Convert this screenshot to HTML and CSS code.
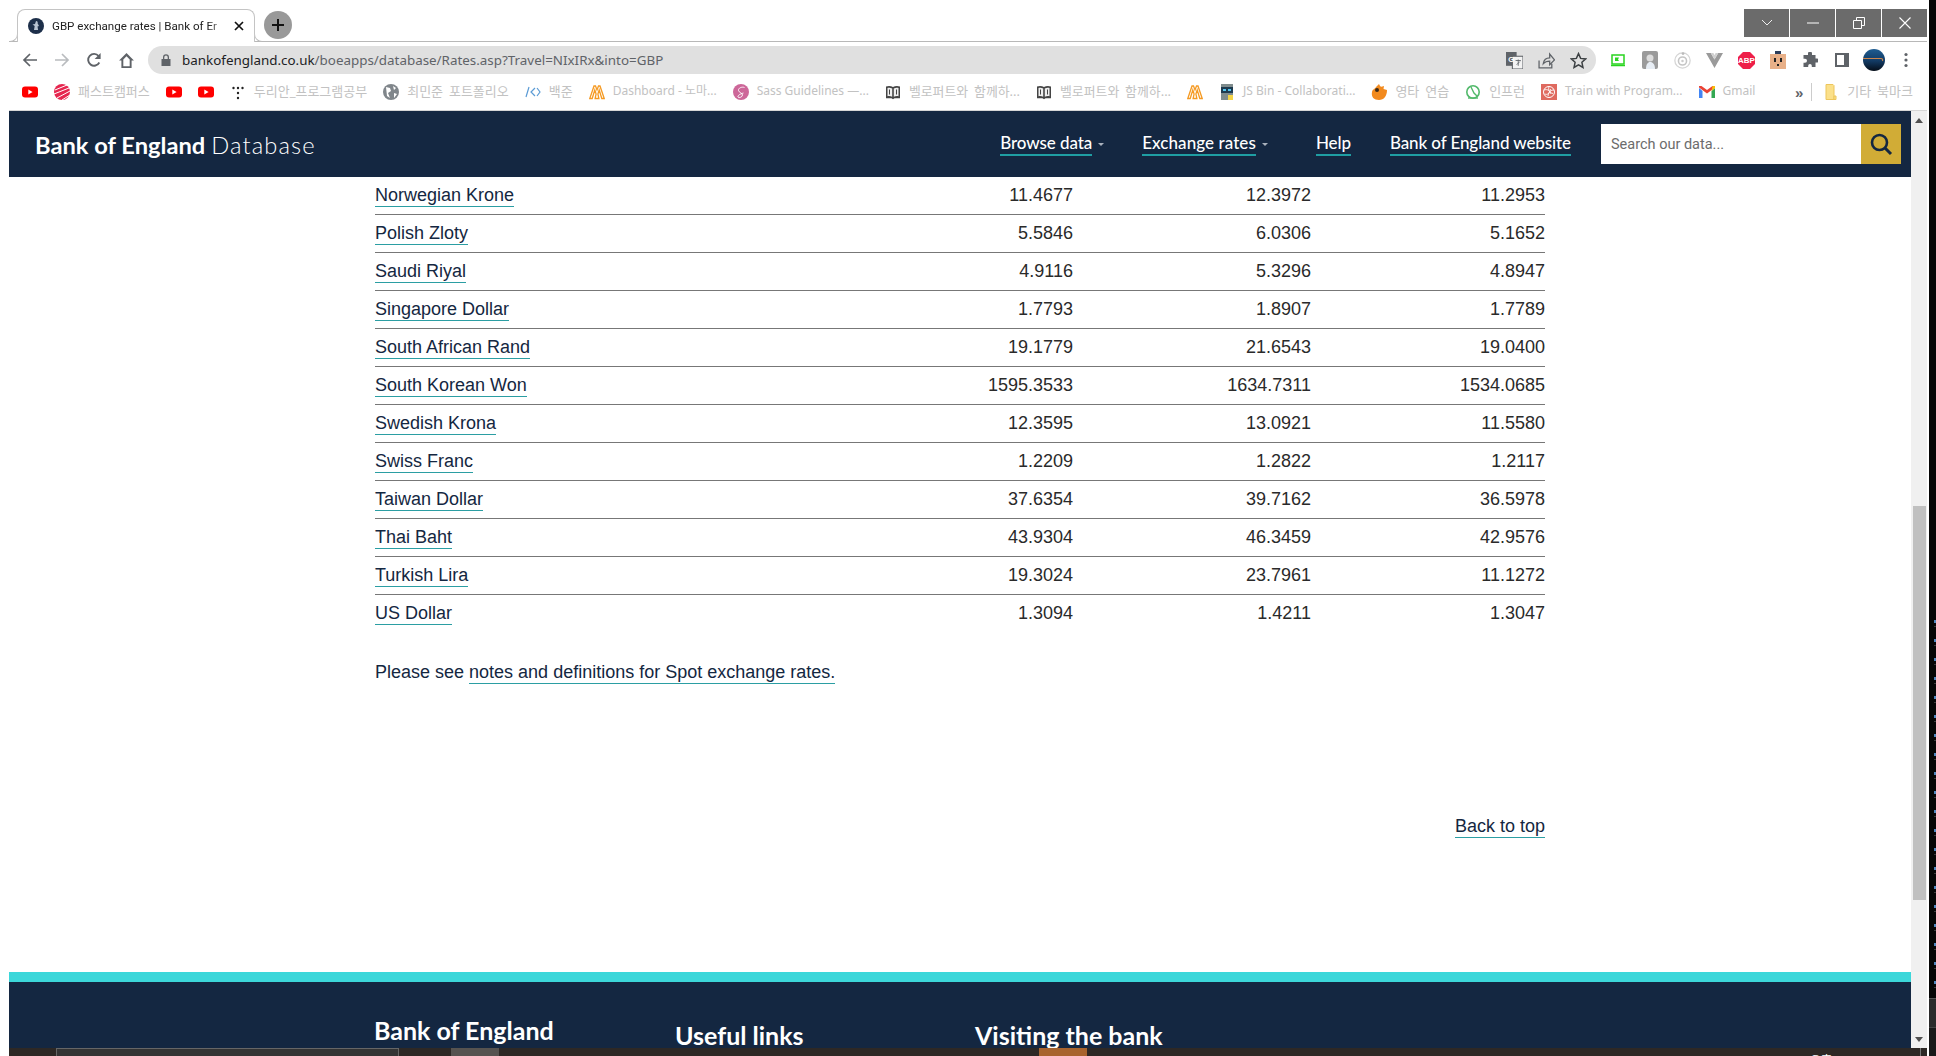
FILE: index.html
```html
<!DOCTYPE html>
<html lang="en">
<head>
<meta charset="utf-8">
<title>GBP exchange rates | Bank of England</title>
<link rel="stylesheet" href="styles.css">
</head>
<body>
<svg class="defs" width="0" height="0" aria-hidden="true">
  <symbol id="yt" viewBox="0 0 16 16"><rect x="0" y="2.5" width="16" height="11" rx="3" fill="#f00"/><path d="M6.3 5.6 10.6 8l-4.3 2.4z" fill="#fff"/></symbol>
  <symbol id="book" viewBox="0 0 16 16"><path d="M1 2.5c2.500-1 5-.8 7 .6 2-1.400 4.500-1.600 7-.6v11.800H9.500l-1.500 1-1.500-1H1z" fill="#444"/><path d="M2.500 4c1.700-.5 3.200-.3 4.700.6v8.200c-1.500-.8-3-1-4.700-.6zM13.500 4c-1.700-.5-3.200-.3-4.700.6v8.200c1.500-.8 3-1 4.700-.6z" fill="#eee"/><path d="M4.500 5.500v5M11.500 5.500v5" stroke="#444"/></symbol>
  <symbol id="mtn" viewBox="0 0 16 16"><path d="M.8 14.500 5 2h1.500L8 6l1.500-4H11l4.200 12.500h-2.400L10.200 6 8.900 10l1 4.500H6.100l1-4.500L5.800 6l-2.600 8.500z" fill="none" stroke="#f59a23" stroke-width="1.300"/></symbol>
</svg>

<div class="desktop">
  <div class="edge-left"></div>

  <div class="window">
    <header class="tabstrip">
      <div class="tab">
        <svg class="favicon" viewBox="0 0 16 16"><circle cx="8" cy="8" r="8" fill="#1d2f4a"/><path d="M8 3c1.500 0 2 1 1.600 2.200L11 8l-1.500.5.600 3.500H6l.7-4L4.500 6.500 7 6z" fill="#b9c4d2"/></svg>
        <span class="tab-title">GBP exchange rates | Bank of Er</span>
        <svg class="tab-close" viewBox="0 0 10 10"><path d="M1 1l8 8M9 1l-8 8" stroke="#111" stroke-width="1.700"/></svg>
      </div>
      <div class="newtab"><svg viewBox="0 0 14 14" width="14" height="14"><path d="M7 1v12M1 7h12" stroke="#111" stroke-width="2"/></svg></div>
      <div class="winbtns">
        <div class="winbtn"><svg viewBox="0 0 12 8" width="12" height="8"><path d="M1 1l5 5 5-5" fill="none" stroke="#eee"/></svg></div>
        <div class="winbtn"><svg viewBox="0 0 12 2" width="12" height="2"><path d="M0 1h12" stroke="#fff" stroke-width="1"/></svg></div>
        <div class="winbtn"><svg viewBox="0 0 12 12" width="12" height="12"><path d="M.5 3.500h8v8h-8zM3.500 3.500v-3h8v8h-3" fill="none" stroke="#fff"/></svg></div>
        <div class="winbtn"><svg viewBox="0 0 12 12" width="12" height="12"><path d="M.5.500l11 11M11.500.500l-11 11" stroke="#fff" stroke-width="1.100"/></svg></div>
      </div>
    </header>

    <div class="toolbar">
      <div class="tool"><svg viewBox="0 0 16 16" width="16" height="16"><path d="M15 8H2M8 2 2 8l6 6" fill="none" stroke="#5f6368" stroke-width="1.700"/></svg></div>
      <div class="tool"><svg viewBox="0 0 16 16" width="16" height="16"><path d="M1 8h13M8 2l6 6-6 6" fill="none" stroke="#b9bcbf" stroke-width="1.700"/></svg></div>
      <div class="tool"><svg viewBox="0 0 16 16" width="16" height="16"><path d="M13.300 10.500A5.900 5.900 0 1 1 12.600 4" fill="none" stroke="#5f6368" stroke-width="1.900"/><path d="M14.600 1v6h-6z" fill="#5f6368"/></svg></div>
      <div class="tool"><svg viewBox="0 0 16 16" width="17" height="17"><path d="M8 1 1 8h2.200v7h9.600V8H15zM5 13.300V7l3-3 3 3v6.300z" fill="#5f6368"/></svg></div>
      <div class="omnibox">
        <svg class="lock" viewBox="0 0 12 14" width="12" height="14"><path d="M3 6V4.200a3 3 0 0 1 6 0V6h1.500v7h-9V6zm1.300 0h3.400V4.200a1.700 1.700 0 0 0-3.400 0z" fill="#5f6368"/></svg>
        <span class="url"><span class="url-host">bankofengland.co.uk</span>/boeapps/database/Rates.asp?Travel=NIxIRx&amp;into=GBP</span>
        <div class="omni-actions">
          <div class="tool"><svg viewBox="0 0 16 16" width="17" height="17"><rect x="0" y="0" width="10" height="13" fill="#5f6368"/><rect x="6" y="4" width="10" height="12" fill="#f3f3f3" stroke="#5f6368"/><text x="2" y="9" class="tr-mark">G</text><path d="M9 8h5M11.500 7v6M13 9l-3 3" stroke="#5f6368" stroke-width=".8"/></svg></div>
          <div class="tool"><svg viewBox="0 0 16 16" width="17" height="17"><path d="M1 8v7h12v-4M5 11c.5-3.500 3-5.500 6-5.500V2l4.500 5.500L11 12V8.500c-2.500 0-4.600.8-6 2.500z" fill="none" stroke="#5f6368" stroke-width="1.200"/></svg></div>
          <div class="tool"><svg viewBox="0 0 16 16" width="17" height="17"><path d="M8 1.500 10 6l4.800.5-3.600 3.200 1 4.800L8 12l-4.200 2.500 1-4.800L1.200 6.500 6 6z" fill="none" stroke="#3c4043" stroke-width="1.400"/></svg></div>
        </div>
      </div>
      <div class="extensions">
        <div class="tool"><svg viewBox="0 0 16 16" width="16" height="16"><rect x="2" y="3" width="12" height="9" fill="#fff" stroke="#29d41f" stroke-width="1.500"/><path d="M5 5.500h4l-1 2 1 1.500H5z" fill="#29d41f"/><path d="M1 13.500h14" stroke="#29d41f" stroke-width="1.500"/></svg></div>
        <div class="tool"><svg viewBox="0 0 16 18" width="16" height="18"><rect width="16" height="18" rx="2" fill="#9b9b9b"/><circle cx="8" cy="7" r="3.500" fill="#ddd"/><path d="M4 18c0-5 2-7 4-7s5 1.500 5 7z" fill="#e8eef5"/></svg></div>
        <div class="tool"><svg viewBox="0 0 16 16" width="17" height="17"><circle cx="8" cy="8" r="7.200" fill="none" stroke="#d5d5d5" stroke-width="1.200"/><circle cx="8" cy="8.500" r="3.800" fill="none" stroke="#c5c5c5" stroke-width="1.500"/><circle cx="8" cy="8.500" r="1.200" fill="#ccc"/><circle cx="8.500" cy="1.500" r="1.300" fill="#bbb"/></svg></div>
        <div class="tool"><svg viewBox="0 0 16 14" width="17" height="15"><path d="M0 0h4.500L8 6l3.500-6H16L8 14z" fill="#9a9a9a"/><path d="M4.500 0H7l1 2 1-2h2.500L8 6z" fill="#d0d0d0"/></svg></div>
        <div class="tool"><svg viewBox="0 0 16 16" width="17" height="17"><path d="M4.700 0h6.600L16 4.700v6.600L11.300 16H4.700L0 11.300V4.700z" fill="#ee1f48"/><text x="8" y="10.700" class="abp-mark">ABP</text></svg></div>
        <div class="tool"><svg viewBox="0 0 16 18" width="16" height="18"><rect x="0" y="3" width="16" height="15" fill="#e8b088"/><rect x="5" y="0" width="6" height="3" fill="#2c3d5a"/><rect x="4" y="7" width="2" height="4" fill="#222"/><rect x="10" y="7" width="2" height="4" fill="#222"/><rect x="7" y="13" width="2" height="2" fill="#222"/></svg></div>
        <div class="tool"><svg viewBox="0 0 16 16" width="16" height="16"><path d="M6 1.500a2 2 0 0 1 4 0V3h3.500v3.500H15a2 2 0 0 1 0 4h-1.500V15H9.800v-1.300a1.800 1.800 0 0 0-3.600 0V15H1.500v-4.200H3a2 2 0 0 0 0-4H1.500V3H6z" fill="#5f6368"/></svg></div>
        <div class="tool"><svg viewBox="0 0 14 14" width="14" height="14"><rect x="1" y="1" width="12" height="12" fill="#fff" stroke="#5f6368" stroke-width="2"/><rect x="9" y="1" width="4" height="12" fill="#5f6368"/></svg></div>
        <div class="tool"><svg viewBox="0 0 22 22" width="22" height="22"><defs><linearGradient id="av" x1="0" y1="0" x2="0" y2="1"><stop offset="0" stop-color="#1f5d92"/><stop offset=".55" stop-color="#123a63"/><stop offset="1" stop-color="#050d18"/></linearGradient></defs><circle cx="11" cy="11" r="11" fill="url(#av)"/><path d="M0 9.500h18c1.500 0 2 1 1.500 2.500" fill="none" stroke="#c9854f" stroke-width="1.100"/></svg></div>
        <div class="tool"><svg viewBox="0 0 4 16" width="4" height="16"><circle cx="2" cy="2.500" r="1.600" fill="#5f6368"/><circle cx="2" cy="8" r="1.600" fill="#5f6368"/><circle cx="2" cy="13.500" r="1.600" fill="#5f6368"/></svg></div>
      </div>
    </div>

    <nav class="bookmarks">
      <a class="bm"><svg class="bm-ico"><use href="#yt"/></svg></a>
      <a class="bm"><svg class="bm-ico" viewBox="0 0 16 16"><circle cx="8" cy="8" r="8" fill="#e6264f"/><path d="M1 6l12-5M0 10l15-6M3 14l13-7M8 16l8-5" stroke="#fff" stroke-width="1"/></svg><span class="bm-text bm-kr">패스트캠퍼스</span></a>
      <a class="bm"><svg class="bm-ico"><use href="#yt"/></svg></a>
      <a class="bm"><svg class="bm-ico"><use href="#yt"/></svg></a>
      <a class="bm"><svg class="bm-ico" viewBox="0 0 16 16"><g fill="#222"><circle cx="3.500" cy="4" r="1.200"/><circle cx="8" cy="4" r="1.200"/><circle cx="12.500" cy="4" r="1.200"/><circle cx="8" cy="9" r="1.200"/><circle cx="8" cy="14" r="1.200"/></g></svg><span class="bm-text bm-kr">두리안_프로그램공부</span></a>
      <a class="bm"><svg class="bm-ico" viewBox="0 0 16 16"><circle cx="8" cy="8" r="8" fill="#80868b"/><path d="M3 3l4 1 1 3-3 2 2 5-3-2zM10 2l3 2-2 2zM11 9l3 1-3 4z" fill="#fff"/></svg><span class="bm-text bm-kr">최민준 포트폴리오</span></a>
      <a class="bm"><svg class="bm-ico" viewBox="0 0 16 16"><path d="M1 13 4 3M10 4 6 8l4 4M12 4l3 4-3 4" fill="none" stroke="#5b9bd5" stroke-width="1.200"/></svg><span class="bm-text bm-kr">백준</span></a>
      <a class="bm"><svg class="bm-ico"><use href="#mtn"/></svg><span class="bm-text bm-long">Dashboard - 노마...</span></a>
      <a class="bm"><svg class="bm-ico" viewBox="0 0 16 16"><circle cx="8" cy="8" r="8" fill="#cd6799"/><path d="M11.500 3.500C9 2.500 5 4 5.500 6.500c.4 2 4 2.500 4 4.500 0 2-3.500 3.300-4.500 2-.7-1 1.500-3 5.500-4" fill="none" stroke="#fff" stroke-width=".9"/></svg><span class="bm-text bm-long">Sass Guidelines —...</span></a>
      <a class="bm"><svg class="bm-ico"><use href="#book"/></svg><span class="bm-text bm-kr bm-long-kr">벨로퍼트와 함께하...</span></a>
      <a class="bm"><svg class="bm-ico"><use href="#book"/></svg><span class="bm-text bm-kr bm-long-kr">벨로퍼트와 함께하...</span></a>
      <a class="bm"><svg class="bm-ico"><use href="#mtn"/></svg></a>
      <a class="bm"><svg class="bm-ico" viewBox="0 0 16 16"><rect x="2" y="0" width="12" height="16" fill="#7f8c8d"/><rect x="2" y="3" width="12" height="6" fill="#1d3b50"/><rect x="4" y="5" width="3" height="2" fill="#53c6f0"/><rect x="9" y="5" width="3" height="2" fill="#53c6f0"/><rect x="9" y="11" width="5" height="5" fill="#f5d547"/></svg><span class="bm-text bm-long">JS Bin - Collaborati...</span></a>
      <a class="bm"><svg class="bm-ico" viewBox="0 0 16 16"><path d="M8 0c1 2 1 2.500 2.500 2.800L13 2l-.5 3L16 6c0 6-3 10-8 10S0 13 1 8c.5-3 3-3 4-5z" fill="#f28a1e"/><circle cx="6" cy="6" r="2" fill="#3a2a1a"/></svg><span class="bm-text bm-kr">영타 연습</span></a>
      <a class="bm"><svg class="bm-ico" viewBox="0 0 16 16"><circle cx="8" cy="8" r="6.200" fill="none" stroke="#52b96b" stroke-width="1.600"/><path d="M6 3l3 6 3 3" fill="none" stroke="#52b96b" stroke-width="1.400"/><path d="M3 14h10" stroke="#52b96b" stroke-width="1.400"/></svg><span class="bm-text bm-kr">인프런</span></a>
      <a class="bm"><svg class="bm-ico" viewBox="0 0 16 16"><rect width="16" height="16" fill="#df6a5f"/><circle cx="8" cy="8" r="5.500" fill="none" stroke="#fff"/><path d="M3 6c3-1 6 0 7 4M8 2.500c-1 3 0 6 4 7M13 6c-3 0-5 1-6 6M3.500 10c3 1 5 0 6-5" fill="none" stroke="#fff" stroke-width=".9"/></svg><span class="bm-text bm-long">Train with Program...</span></a>
      <a class="bm"><svg class="bm-ico" viewBox="0 0 16 12"><path d="M0 2v10h3.500V5z" fill="#4285f4"/><path d="M16 2v10h-3.500V5z" fill="#34a853"/><path d="M0 1.500 8 7.500l8-6V0h-2.500L8 4 2.500 0H0z" fill="#ea4335"/><path d="M12.500 5 16 2V0h-2.500z" fill="#fbbc04"/></svg><span class="bm-text">Gmail</span></a>
      <div class="bm-end">
        <span class="bm-more">»</span>
        <span class="bm-sep"></span>
        <a class="bm"><svg class="bm-ico" viewBox="0 0 16 16"><path d="M3 .500h7l1 1v14H3z" fill="#fbe08a" stroke="#edc65c"/><path d="M11 12h2v3.500h-2z" fill="#fbe08a" stroke="#edc65c"/></svg><span class="bm-text bm-kr">기타 북마크</span></a>
      </div>
    </nav>

    <div class="viewport">
      <div class="page">
        <div class="sitebar">
          <a class="logo"><b>Bank of England</b> <span class="logo-light">Database</span></a>
          <div class="sitelinks">
            <a class="sitelink sitelink-browse">Browse data<i class="caret"></i></a>
            <a class="sitelink sitelink-rates">Exchange rates<i class="caret"></i></a>
            <a class="sitelink sitelink-help">Help</a>
            <a class="sitelink">Bank of England website</a>
          </div>
          <div class="search">
            <span class="search-input">Search our data...</span>
            <div class="search-btn"><svg viewBox="0 0 24 24" width="24" height="24"><circle cx="10.500" cy="10.500" r="7.500" fill="none" stroke="#142741" stroke-width="2.600"/><path d="M16 16l6 6" stroke="#142741" stroke-width="3"/></svg></div>
          </div>
        </div>

        <main class="content">
          <div class="rates">
            <div class="rate"><a class="name"><span class="ul">Norwegian Krone</span></a><span class="num">11.4677</span><span class="num">12.3972</span><span class="num">11.2953</span></div>
            <div class="rate"><a class="name"><span class="ul">Polish Zloty</span></a><span class="num">5.5846</span><span class="num">6.0306</span><span class="num">5.1652</span></div>
            <div class="rate"><a class="name"><span class="ul">Saudi Riyal</span></a><span class="num">4.9116</span><span class="num">5.3296</span><span class="num">4.8947</span></div>
            <div class="rate"><a class="name"><span class="ul">Singapore Dollar</span></a><span class="num">1.7793</span><span class="num">1.8907</span><span class="num">1.7789</span></div>
            <div class="rate"><a class="name"><span class="ul">South African Rand</span></a><span class="num">19.1779</span><span class="num">21.6543</span><span class="num">19.0400</span></div>
            <div class="rate"><a class="name"><span class="ul">South Korean Won</span></a><span class="num">1595.3533</span><span class="num">1634.7311</span><span class="num">1534.0685</span></div>
            <div class="rate"><a class="name"><span class="ul">Swedish Krona</span></a><span class="num">12.3595</span><span class="num">13.0921</span><span class="num">11.5580</span></div>
            <div class="rate"><a class="name"><span class="ul">Swiss Franc</span></a><span class="num">1.2209</span><span class="num">1.2822</span><span class="num">1.2117</span></div>
            <div class="rate"><a class="name"><span class="ul">Taiwan Dollar</span></a><span class="num">37.6354</span><span class="num">39.7162</span><span class="num">36.5978</span></div>
            <div class="rate"><a class="name"><span class="ul">Thai Baht</span></a><span class="num">43.9304</span><span class="num">46.3459</span><span class="num">42.9576</span></div>
            <div class="rate"><a class="name"><span class="ul">Turkish Lira</span></a><span class="num">19.3024</span><span class="num">23.7961</span><span class="num">11.1272</span></div>
            <div class="rate rate-last"><a class="name"><span class="ul">US Dollar</span></a><span class="num">1.3094</span><span class="num">1.4211</span><span class="num">1.3047</span></div>
          </div>
          <p class="note">Please see <a class="ul">notes and definitions for Spot exchange rates.</a></p>
          <p class="backtop"><a class="ul">Back to top</a></p>
        </main>

        <footer class="foot">
          <div class="foot-grid">
            <h3 class="foot-brand">Bank of England</h3>
            <h3 class="foot-head">Useful links</h3>
            <h3 class="foot-head">Visiting the bank</h3>
          </div>
        </footer>
      </div>

      <div class="scrollbar">
        <span class="arrow-up"></span>
        <span class="thumb"></span>
        <span class="arrow-down"></span>
      </div>
    </div>

    <div class="taskbar">
      <span class="task task-active"></span>
      <span class="task task-grey"></span>
      <span class="task task-orange"></span>
      <span class="clock">오후 1:23</span>
    </div>
  </div>

  <div class="edge-gap"></div>
  <div class="edge-right">
    <div class="edge-code"></div>
    <div class="edge-tile"></div>
    <div class="edge-tile2"></div>
  </div>
</div>
</body>
</html>
```

FILE: styles.css
```css
* { box-sizing: border-box; }
html, body { margin: 0; height: 100%; overflow: hidden; background: #fff; }
.defs { position: absolute; }
a { color: inherit; text-decoration: none; }
svg { display: block; flex: none; }

.desktop { display: flex; width: 1936px; height: 1056px; font-family: "Liberation Sans", Arial, sans-serif; }
.edge-left { width: 9px; background: #fff; flex: none; }
.edge-gap { width: 2px; background: #fff; flex: none; }
.edge-right { width: 7px; flex: none; display: flex; flex-direction: column; background: #060606; }
.edge-code { flex: 1; background: linear-gradient(#060606 620px, transparent 620px) 0 0 / 100% 100% no-repeat, repeating-linear-gradient(#060606 0 12px, #4f86bd 12px 15px, #060606 15px 18px, #3a3a3a 18px 19px) right top / 2px 100% no-repeat, #060606; }
.edge-tile { height: 29px; background: #2b2b2b; border-top: 1px solid #555; }
.edge-tile2 { height: 29px; background: #191919; border-top: 1px solid #444; }

.window { width: 1918px; flex: none; display: flex; flex-direction: column; background: #fff; }

/* tab strip */
.tabstrip { height: 42px; flex: none; display: flex; align-items: flex-start; border-bottom: 1.500px solid #b8b8b8; }
.tab { position: relative; width: 238px; height: 33px; margin: 9px 0 -1.500px 8px; padding: 0 8px 0 10px; display: flex; align-items: center; gap: 8px; background: #fff; border: 1px solid #c4c4c4; border-bottom: 0; border-radius: 8px 8px 0 0; font: 11.600px "Roboto", "Noto Sans", sans-serif; color: #222; }
.tab::before, .tab::after { content: ""; position: absolute; bottom: 0; width: 8px; height: 8px; border-bottom: 1.500px solid #b8b8b8; }
.tab::before { left: -9px; border-right: 1px solid #c4c4c4; border-bottom-right-radius: 8px; background: #fff; }
.tab::after { right: -9px; border-left: 1px solid #c4c4c4; border-bottom-left-radius: 8px; background: #fff; }
.favicon { width: 16px; height: 16px; }
.tab-title { flex: 1; white-space: nowrap; -webkit-mask-image: linear-gradient(90deg, #000 90%, rgba(0,0,0,.25) 100%); mask-image: linear-gradient(90deg, #000 90%, rgba(0,0,0,.25) 100%); }
.tab-close { width: 10px; height: 10px; margin-right: 2px; }
.newtab { width: 28px; height: 28px; margin: 11px 0 0 9px; border-radius: 50%; background: #999; display: flex; align-items: center; justify-content: center; }
.winbtns { margin-left: auto; margin-top: 9px; display: flex; gap: 1px; }
.winbtn { width: 45px; height: 28px; background: #6b6b6b; display: flex; align-items: center; justify-content: center; }

/* toolbar */
.toolbar { height: 38px; flex: none; display: flex; align-items: center; padding: 0 9px 2px; gap: 8px; }
.tool { width: 24px; height: 24px; flex: none; display: flex; align-items: center; justify-content: center; }
.omnibox { flex: 1; height: 28px; margin-left: 2px; margin-right: 2px; background: #e0e0e0; border-radius: 14px; display: flex; align-items: center; padding: 0 6px 0 12px; }
.lock { margin-right: 10px; }
.url { font: 13.400px "Noto Sans", "Open Sans", sans-serif; color: #5f6368; white-space: nowrap; }
.url-host { color: #202124; }
.omni-actions { margin-left: auto; display: flex; gap: 8px; }
.extensions { display: flex; gap: 8px; }
.tr-mark { font: 700 7px "Liberation Sans", sans-serif; fill: #fff; }
.abp-mark { font: 700 7.500px "Liberation Sans", sans-serif; fill: #fff; text-anchor: middle; }

/* bookmarks */
.bookmarks { height: 31px; flex: none; display: flex; align-items: center; gap: 16px; padding: 0 0 6px 13px; border-bottom: 1px solid #d6d6d6; font: 12px "Noto Sans", "Noto Sans CJK KR", sans-serif; color: #c2c2c2; white-space: nowrap; }
.bm { display: flex; align-items: center; gap: 8px; flex: none; }
.bm-ico { width: 16px; height: 16px; }
.bm-text { display: block; font-family: "Noto Sans", "Noto Sans CJK KR", sans-serif; line-height: 16px; margin-top: -2px; }
.bm-kr { font-size: 13px; word-spacing: 2.500px; }
.bm-long { font-size: 12px; }
.bm-long-kr { font-size: 12.900px; }
.bm-end { margin-left: auto; display: flex; align-items: center; padding-right: 14px; }
.bm-more { color: #5f6368; font: 700 15px "Liberation Sans", sans-serif; margin-right: 8px; }
.bm-sep { width: 1px; height: 18px; background: #ccc; margin-right: 11px; }

/* viewport */
.viewport { flex: 1; display: flex; min-height: 0; }
.page { flex: 1; min-width: 0; display: flex; flex-direction: column; overflow: hidden; }
.scrollbar { width: 16px; flex: none; background: #f0f0f0; display: flex; flex-direction: column; align-items: center; padding-top: 7px; }
.arrow-up { border: 4.500px solid transparent; border-top: 0; border-bottom: 5px solid #505050; }
.thumb { width: 13px; height: 394px; margin-top: 383px; background: #c0c0c0; }
.arrow-down { margin-top: auto; margin-bottom: 6px; border: 4.500px solid transparent; border-bottom: 0; border-top: 5px solid #505050; }

/* site bar */
.sitebar { height: 66px; flex: none; background: #142741; color: #fff; display: flex; align-items: center; padding: 0 10px 0 26px; }
.logo { font: 23.700px "Lato", sans-serif; white-space: nowrap; margin-top: 2px; }
.logo b { font-weight: 700; }
.logo-light { font-weight: 300; letter-spacing: 1.100px; }
.sitelinks { margin-left: auto; display: flex; align-items: center; }
.sitelink { position: relative; display: block; font: 500 17px "Lato", sans-serif; letter-spacing: -.1px; line-height: 22px; border-bottom: 2px solid #1f9ea3; white-space: nowrap; margin-right: 41px; }
.sitelink:last-child { margin-right: 30px; }
.sitelink-browse { margin-right: 50px; }
.sitelink-rates { margin-right: 60px; letter-spacing: .08px; }
.sitelink-help { margin-right: 39px; }
.caret { position: absolute; left: calc(100% + 6px); top: 11px; border: 3px solid transparent; border-bottom: 0; border-top: 3px solid #aab2bd; }
.search { width: 300px; height: 40px; flex: none; display: flex; background: #fff; }
.search-input { flex: 1; padding-left: 10px; font: 14.500px/42px "Roboto", sans-serif; color: #6c6c6c; }
.search-btn { width: 40px; background: #d1ac36; display: flex; align-items: center; justify-content: center; }

/* content */
.content { width: 1170px; margin: 0 auto; flex: none; font-size: 18px; color: #142741; }
.rate { display: grid; grid-template-columns: 400px 298px 238px 234px; height: 38px; align-items: center; padding-bottom: 1px; border-bottom: 1.500px solid #777; }
.rate-last { border-bottom-color: transparent; }
.name { justify-self: start; }
.ul { border-bottom: 1.500px solid #2b9ea3; padding-bottom: 1px; }
.num { text-align: right; color: #2a2a2a; }
.note { margin: 29px 0 0; line-height: 20px; }
.backtop { margin: 134px 0 0; line-height: 20px; text-align: right; }

/* footer */
.foot { flex: 1; margin-top: 136px; border-top: 10px solid #3cd7da; background: #142741; color: #fff; font-family: "Lato", sans-serif; }
.foot-grid { width: 1172px; margin: 0 auto; display: grid; grid-template-columns: 301px 300px 300px; }
.foot-brand, .foot-head { margin: 0; font-size: 25px; font-weight: 700; white-space: nowrap; }
.foot-brand { padding-top: 33px; }
.foot-head { padding-top: 38px; }

/* taskbar */
.taskbar { height: 8px; flex: none; background: #2d2825; display: flex; overflow: hidden; font: 12px "Noto Sans CJK KR", sans-serif; color: #fff; }
.task { display: block; height: 8px; }
.task-active { width: 343px; margin-left: 47px; background: #343434; border: 1px solid #666; border-bottom: 0; }
.task-grey { width: 48px; margin-left: 52px; background: #565350; }
.task-orange { width: 48px; margin-left: 540px; background: #a8642e; }
.clock { margin-left: 723px; padding-top: 4px; line-height: 16px; height: 20px; white-space: nowrap; border-right: 1px solid #777; padding-right: 62px; }
```
